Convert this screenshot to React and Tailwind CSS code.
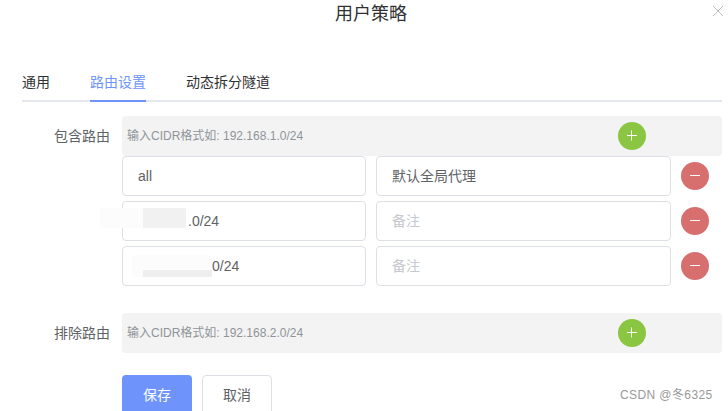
const font = 'font-["Liberation_Sans","Noto_Sans_CJK_SC",sans-serif]';

function CircleButton({ type }) {
  const bg = type === 'add' ? 'bg-[#8bc643]' : 'bg-[#d86f6f]';
  return (
    <button type="button" className={`flex h-7 w-7 items-center justify-center rounded-full ${bg}`}>
      <svg width="12" height="12" viewBox="0 0 12 12" fill="none" stroke="white" strokeWidth="1">
        <path d="M1 5.5h10" />
        {type === 'add' && <path d="M5.5 0.5v10" />}
      </svg>
    </button>
  );
}

function AddBar({ placeholder }) {
  return (
    <div className="flex h-10 w-[600px] items-center rounded bg-[#f3f3f3] pl-[5px]">
      <span className="w-[491px] text-xs text-[#909399]">{placeholder}</span>
      <CircleButton type="add" />
    </div>
  );
}

function RouteRow({ value, note, blur }) {
  return (
    <div className="flex items-center">
      <div className="relative flex h-10 w-[244px] items-center rounded border border-[#dcdfe6] pl-[15px] text-sm text-[#606266]">
        {value}
        {blur}
      </div>
      <div className={`ml-2.5 flex h-10 w-[295px] items-center rounded border border-[#dcdfe6] pl-[15px] text-sm ${note ? 'text-[#606266]' : 'text-[#c6c8cf]'}`}>
        {note || '备注'}
      </div>
      <div className="ml-2.5">
        <CircleButton type="remove" />
      </div>
    </div>
  );
}

export default function App() {
  return (
    <div className={`relative h-[411px] w-[728px] overflow-hidden bg-white ${font}`}>
      <div className="flex h-[28px] items-center justify-center pl-[14px] text-lg leading-none text-[#303133]">用户策略</div>
      <svg className="absolute right-[5px] top-[6px]" width="10" height="10" viewBox="0 0 10 10" fill="none" stroke="#b4b6bb" strokeWidth="0.9">
        <path d="M0 0l10 10M10 0L0 10" />
      </svg>

      <div className="ml-[22px] mt-[40px] flex h-[34px] w-[700px] gap-10 border-b-2 border-[#e4e7ed] text-sm text-[#303133]">
        <div className="leading-[28px]">通用</div>
        <div className="-mb-0.5 border-b-2 border-[#6e94fb] leading-[28px] text-[#6e94fb]">路由设置</div>
        <div className="leading-[28px]">动态拆分隧道</div>
      </div>

      <div className="mt-3.5 flex">
        <div className="w-[110px] pt-[12px] text-right text-sm leading-4 text-[#606266]">包含路由</div>
        <div className="ml-3 flex flex-col">
          <AddBar placeholder="输入CIDR格式如: 192.168.1.0/24" />
          <div className="flex flex-col gap-[5px]">
            <RouteRow value="all" note="默认全局代理" />
            <RouteRow
              value={<span className="pl-[50px]">.0/24</span>}
              blur={
                <div className="absolute -left-[23px] top-[6px] flex h-5 w-[86px]">
                  <div className="w-[43px] bg-[#fcfcfc]" />
                  <div className="flex-1 bg-[#f1f1f1]" />
                </div>
              }
            />
            <RouteRow
              value={<span className="pl-[74px]">0/24</span>}
              blur={
                <div className="absolute left-[9px] top-[8px] h-[22px] w-[80px] bg-[#fcfcfc]">
                  <div className="absolute bottom-0 right-0 h-[7px] w-[69px] bg-[#eeeeee]" />
                </div>
              }
            />
          </div>
        </div>
      </div>

      <div className="mt-[27px] flex">
        <div className="w-[110px] pt-[12px] text-right text-sm leading-4 text-[#606266]">排除路由</div>
        <div className="ml-3">
          <AddBar placeholder="输入CIDR格式如: 192.168.2.0/24" />
        </div>
      </div>

      <div className="ml-[122px] mt-[22px] flex gap-2.5">
        <button type="button" className="h-10 w-[70px] rounded bg-[#6e94fb] text-sm text-white">保存</button>
        <button type="button" className="h-10 w-[70px] rounded border border-[#dcdfe6] bg-white text-sm text-[#606266]">取消</button>
      </div>

      <div className="absolute left-[620px] top-[387px] text-xs leading-4 tracking-[0.4px] text-[#999999]">CSDN @冬6325</div>
    </div>
  );
}
